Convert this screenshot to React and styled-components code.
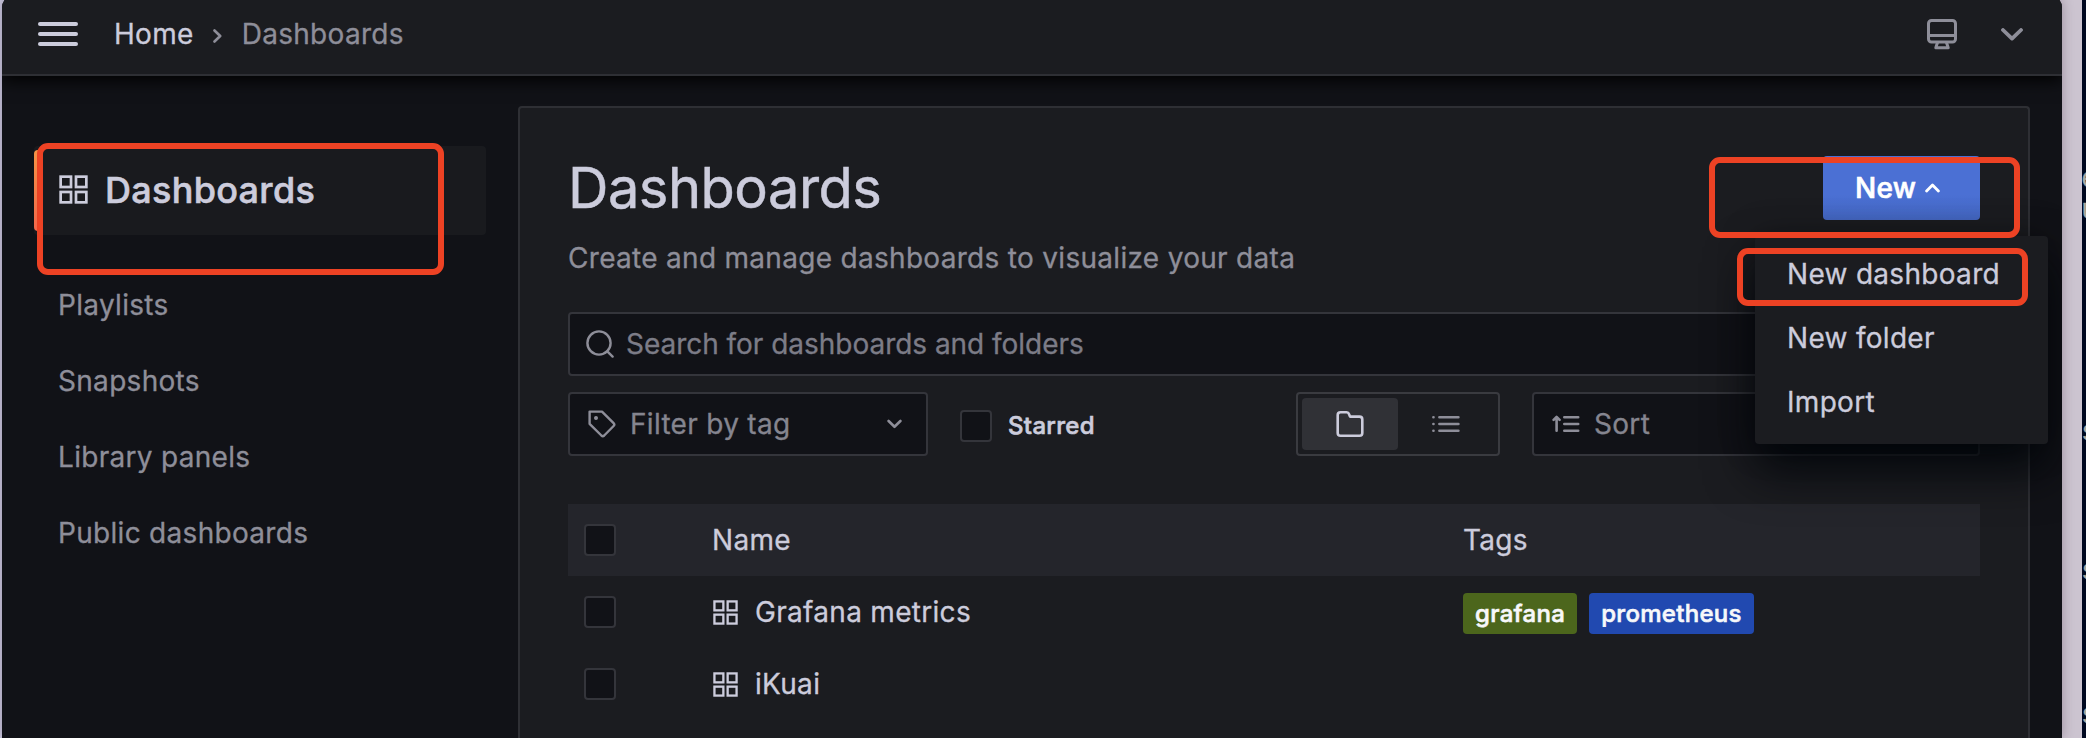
import React from "react";
import styled, { createGlobalStyle, css } from "styled-components";

const GlobalStyle = createGlobalStyle`
  *, *::before, *::after { box-sizing: border-box; }
  html, body { margin: 0; padding: 0; height: 100%; overflow: hidden; }
  #root { height: 738px; }
  body {
    background: #000820;
    font-family: Inter, "Liberation Sans", sans-serif;
    font-size: 28px;
    line-height: 44px;
    letter-spacing: 0.3px;
    color: #ccccdc;
    -webkit-text-stroke: 0.3px currentColor;
  }
  h1, h2, p, ul { margin: 0; padding: 0; font-weight: 400; }
  svg { display: block; flex: none; }
`;

const emphasis = css`
  font-weight: 500;
  -webkit-text-stroke: 0.6px currentColor;
`;

const Desktop = styled.div`
  position: relative;
  display: flex;
  width: 2086px;
  height: 738px;
  overflow: hidden;
  background: linear-gradient(90deg, #c9c7de 0 50%, #ccc4d0 50%);
`;

const Window = styled.div`
  position: relative;
  display: flex;
  flex-direction: column;
  width: 2060px;
  margin: -6px 0 0 2px;
  overflow: hidden;
  background: #111217;
  border-radius: 14px 14px 0 0;
  box-shadow: 0 0 12px rgba(60, 40, 60, 0.35);
`;

const BehindWindow = styled.div`
  margin-left: auto;
  width: 4px;
  height: 738px;
  background: #000820;
  color: #a9a9a4;
  overflow: hidden;
  position: relative;
`;

const Sliver = styled.span`
  position: absolute;
  left: -1px;
  top: ${(p) => p.$top}px;
  font-family: "Liberation Mono", monospace;
  font-size: 28px;
  line-height: 28px;
`;

const Header = styled.header`
  position: relative;
  z-index: 1;
  display: flex;
  align-items: center;
  flex: none;
  height: 82px;
  padding: 0 39px 0 36px;
  border-bottom: 2px solid #2e2f34;
  background: #1b1c20;
  box-shadow: 0 4px 16px #000;
`;

const MenuToggle = styled.div`
  display: flex;
  flex-direction: column;
  gap: 6px;
  width: 40px;
`;

const MenuBar = styled.span`
  height: 4px;
  border-radius: 2px;
  background: #ccccdc;
`;

const Crumbs = styled.nav`
  display: flex;
  align-items: center;
  margin-left: 36px;
`;

const Crumb = styled.span`
  color: ${(p) => (p.$muted ? "#8e8e99" : "#ccccdc")};
`;

const CrumbArrow = styled.span`
  display: flex;
  width: 48px;
  padding-top: 3px;
  justify-content: center;
`;

const HeaderActions = styled.div`
  display: flex;
  align-items: center;
  gap: 44px;
  margin-left: auto;
`;

const Body = styled.div`
  display: flex;
  flex: 1;
`;

const Sidebar = styled.aside`
  width: 484px;
  padding: 70px 0 0 32px;
  margin-right: 32px;
`;

const SidebarTitle = styled.div`
  position: relative;
  display: flex;
  align-items: center;
  gap: 17px;
  height: 89px;
  padding: 0 0 2px 25px;
  border-radius: 4px;
  background: #191a1e;
  font-size: 36px;
  ${emphasis}
  letter-spacing: 0.3px;
  &::before {
    content: "";
    position: absolute;
    left: 0;
    top: 4px;
    bottom: 4px;
    width: 8px;
    border-radius: 4px;
    background: linear-gradient(#f59345, #f2674b);
  }
`;

const SidebarList = styled.ul`
  list-style: none;
  padding-top: 32px;
`;

const SidebarLink = styled.li`
  height: 76px;
  line-height: 76px;
  padding-left: 24px;
  color: #8e8e99;
`;

const Panel = styled.main`
  width: 1512px;
  margin-top: 30px;
  padding: 48px 48px 0;
  border: 2px solid #2e2f34;
  border-bottom: 0;
  border-radius: 4px 4px 0 0;
  background: #1b1c20;
`;

const TitleRow = styled.div`
  display: flex;
  justify-content: space-between;
  height: 80px;
`;

const Title = styled.h1`
  font-size: 56px;
  line-height: 64px;
  letter-spacing: -0.5px;
  -webkit-text-stroke: 0.5px currentColor;
`;

const NewButton = styled.button`
  display: flex;
  align-items: center;
  gap: 9px;
  width: 157px;
  height: 64px;
  padding: 0 0 0 32px;
  border: 0;
  border-radius: 4px;
  background: linear-gradient(#4b70d4 60%, #4467c2);
  color: #fff;
  font: 500 28px/60px Inter, sans-serif;
  letter-spacing: 0.3px;
  ${emphasis}
`;

const Subtitle = styled.p`
  height: 76px;
  color: #8e8e99;
`;

const fieldBox = css`
  display: flex;
  align-items: center;
  height: 64px;
  border: 2px solid #34353b;
  border-radius: 4px;
  background: #111217;
  color: #85858f;
`;

const SearchField = styled.div`
  ${fieldBox}
  padding-left: 16px;
  gap: 12px;
  color: #7c7c87;
  letter-spacing: -0.03px;
`;

const SelectField = styled.div`
  ${fieldBox}
  width: ${(p) => p.$width}px;
  padding: 0 24px 0 18px;
  gap: 14px;
`;

const SelectText = styled.span`
  flex: 1;
`;

const Filters = styled.div`
  display: flex;
  align-items: center;
  margin-top: 16px;
`;

const Checkbox = styled.span`
  flex: none;
  width: 32px;
  height: 32px;
  border: 2px solid #34353b;
  border-radius: 4px;
  background: #111217;
`;

const Starred = styled.label`
  display: flex;
  align-items: center;
  gap: 16px;
  margin: 4px auto 0 32px;
  font-size: 24px;
  ${emphasis}
  line-height: 32px;
`;

const ViewSwitch = styled.div`
  display: flex;
  height: 64px;
  width: 204px;
  padding: 4px;
  margin-right: 32px;
  border: 2px solid #3a3b40;
  border-radius: 4px;
`;

const ViewOption = styled.div`
  display: grid;
  place-items: center;
  width: 96px;
  border-radius: 4px;
  color: ${(p) => (p.$active ? "#ccccdc" : "#8e8e99")};
  background: ${(p) => (p.$active ? "#303136" : "transparent")};
`;

const Table = styled.div`
  margin-top: 48px;
`;

const Row = styled.div`
  display: grid;
  grid-template-columns: 128px 751px 1fr;
  align-items: center;
  height: 72px;
  padding-left: 16px;
  background: ${(p) => (p.$head ? "#24252b" : "transparent")};
`;

const NameCell = styled.div`
  display: flex;
  align-items: center;
  gap: 17px;
  padding-left: ${(p) => (p.$head ? 0 : 1)}px;
`;

const TagList = styled.div`
  display: flex;
  gap: 12px;
  margin-top: 3px;
`;

const Tag = styled.span`
  height: 41px;
  padding: 0 12px;
  border-radius: 4px;
  background: ${(p) => p.$color};
  color: #f7f8fa;
  font-size: 24px;
  ${emphasis}
  line-height: 41px;
`;

const Dropdown = styled.div`
  position: absolute;
  z-index: 3;
  left: 1753px;
  top: 242px;
  width: 293px;
  height: 208px;
  padding: 6px 0;
  border-radius: 4px;
  background: #1b1c20;
  box-shadow: 0 26px 48px rgba(1, 4, 9, 0.9), 0 0 36px rgba(1, 4, 9, 0.25);
`;

const DropdownItem = styled.div`
  height: 64px;
  line-height: 64px;
  padding-left: 32px;
`;

const Highlight = styled.div`
  position: absolute;
  z-index: 4;
  left: ${(p) => p.$x}px;
  top: ${(p) => p.$y}px;
  width: ${(p) => p.$w}px;
  height: ${(p) => p.$h}px;
  border: 6px solid #ed4224;
  border-radius: 11px;
`;

const AppsIcon = ({ size }) => (
  <svg width={size} height={size} viewBox="0 0 28 28" fill="none" stroke="#ccccdc" strokeWidth="2.6">
    <rect x="1.6" y="1.6" width="10" height="10" />
    <rect x="16.4" y="1.6" width="10" height="10" />
    <rect x="1.6" y="16.4" width="10" height="10" />
    <rect x="16.4" y="16.4" width="10" height="10" />
  </svg>
);

const Chevron = ({ width, height, stroke, d, color }) => (
  <svg width={width} height={height} viewBox={`0 0 ${width} ${height}`} fill="none"
    stroke={color} strokeWidth={stroke} strokeLinecap="round" strokeLinejoin="round">
    <path d={d} />
  </svg>
);

const MonitorIcon = () => (
  <svg width="30" height="31" viewBox="0 0 30 31" fill="none" stroke="#8e8e99" strokeWidth="3" strokeLinejoin="round">
    <rect x="1.5" y="1.5" width="27" height="21.5" rx="3" />
    <path d="M2 16.5H28" />
    <path d="M10.5 23.5L8.8 28.7H21.2L19.5 23.5" />
  </svg>
);

const SearchIcon = () => (
  <svg width="28" height="28" viewBox="0 0 28 28" fill="none" stroke="#8e8e99" strokeWidth="2.4" strokeLinecap="round">
    <circle cx="13" cy="13" r="11.6" />
    <path d="M21.3 21.3L26.6 26.6" />
  </svg>
);

const TagIcon = () => (
  <svg width="28" height="28" viewBox="0 0 28 28" fill="none" stroke="#8e8e99" strokeWidth="2.4" strokeLinejoin="round">
    <path d="M1.6 1.6H14L25.6 13.2Q27 14.6 25.6 16L16.2 25.5Q14.8 26.8 13.4 25.5L1.6 13.8Z" />
    <circle cx="8" cy="8" r="1.3" fill="#8e8e99" stroke="#8e8e99" strokeWidth="1.4" />
  </svg>
);

const FolderIcon = () => (
  <svg width="28" height="28" viewBox="0 0 28 28" fill="none" stroke="currentColor" strokeWidth="2.6" strokeLinejoin="round">
    <path d="M4.5 2.3H10.6Q12.4 2.3 13 4L14 6.6H23.5Q26.3 6.6 26.3 9.4V22.9Q26.3 25.7 23.5 25.7H4.5Q1.7 25.7 1.7 22.9V5.1Q1.7 2.3 4.5 2.3Z" />
  </svg>
);

const ListIcon = () => (
  <svg width="28" height="18" viewBox="0 0 28 18" fill="none" stroke="currentColor" strokeWidth="2.6" strokeLinecap="round">
    <path d="M7.4 2.3H26.4M7.4 9H26.4M7.4 15.7H26.4" />
    <path d="M1.4 2.3H1.5M1.4 9H1.5M1.4 15.7H1.5" />
  </svg>
);

const SortIcon = () => (
  <svg width="28" height="18" viewBox="0 0 28 18" fill="none" stroke="#8e8e99" strokeWidth="2.6" strokeLinecap="round" strokeLinejoin="round">
    <path d="M12.3 2.3H26.2M12.3 9H26.2M12.3 15.7H26.2" />
    <path d="M4.6 15.7V2M1.6 4.8L4.6 1.8L7.6 4.8" />
  </svg>
);

const links = ["Playlists", "Snapshots", "Library panels", "Public dashboards"];
const dashboards = [
  { name: "Grafana metrics", tags: [["grafana", "#4c661c"], ["prometheus", "#2149b0"]] },
  { name: "iKuai", tags: [] },
];

export default function App() {
  return (
    <>
      <GlobalStyle />
      <Desktop>
        <Window>
          <Header>
            <MenuToggle><MenuBar /><MenuBar /><MenuBar /></MenuToggle>
            <Crumbs>
              <Crumb>Home</Crumb>
              <CrumbArrow>
                <Chevron width={9} height={14} stroke={2.6} color="#8e8e99" d="M1.5 1.5L7.2 7L1.5 12.5" />
              </CrumbArrow>
              <Crumb $muted>Dashboards</Crumb>
            </Crumbs>
            <HeaderActions>
              <MonitorIcon />
              <Chevron width={22} height={13} stroke={3.8} color="#8e8e99" d="M2 2L11 10.6L20 2" />
            </HeaderActions>
          </Header>
          <Body>
            <Sidebar>
              <SidebarTitle><AppsIcon size={29} />Dashboards</SidebarTitle>
              <SidebarList>
                {links.map((l) => <SidebarLink key={l}>{l}</SidebarLink>)}
              </SidebarList>
            </Sidebar>
            <Panel>
              <TitleRow>
                <Title>Dashboards</Title>
                <NewButton>
                  New
                  <Chevron width={15} height={10} stroke={2.8} color="#fff" d="M1.6 8L7.5 2L13.4 8" />
                </NewButton>
              </TitleRow>
              <Subtitle>Create and manage dashboards to visualize your data</Subtitle>
              <SearchField><SearchIcon />Search for dashboards and folders</SearchField>
              <Filters>
                <SelectField $width={360}>
                  <TagIcon />
                  <SelectText>Filter by tag</SelectText>
                  <Chevron width={15} height={10} stroke={2.6} color="#8e8e99" d="M1.6 2L7.5 7.8L13.4 2" />
                </SelectField>
                <Starred><Checkbox />Starred</Starred>
                <ViewSwitch>
                  <ViewOption $active><FolderIcon /></ViewOption>
                  <ViewOption><ListIcon /></ViewOption>
                </ViewSwitch>
                <SelectField $width={448}>
                  <SortIcon />
                  <SelectText>Sort</SelectText>
                </SelectField>
              </Filters>
              <Table>
                <Row $head>
                  <Checkbox />
                  <NameCell $head>Name</NameCell>
                  <span>Tags</span>
                </Row>
                {dashboards.map((d) => (
                  <Row key={d.name}>
                    <Checkbox />
                    <NameCell><AppsIcon size={25} />{d.name}</NameCell>
                    <TagList>
                      {d.tags.map(([t, c]) => <Tag key={t} $color={c}>{t}</Tag>)}
                    </TagList>
                  </Row>
                ))}
              </Table>
            </Panel>
          </Body>
          <Dropdown>
            <DropdownItem>New dashboard</DropdownItem>
            <DropdownItem>New folder</DropdownItem>
            <DropdownItem>Import</DropdownItem>
          </Dropdown>
        </Window>
        <BehindWindow>
          <Sliver $top={166}>e</Sliver>
          <Sliver $top={197}>u</Sliver>
          <Sliver $top={419}>s</Sliver>
          <Sliver $top={558}>s</Sliver>
          <Sliver $top={702}>s</Sliver>
        </BehindWindow>
        <Highlight $x={37} $y={143} $w={407} $h={132} />
        <Highlight $x={1709} $y={157} $w={311} $h={81} />
        <Highlight $x={1737} $y={248} $w={291} $h={58} />
      </Desktop>
    </>
  );
}
